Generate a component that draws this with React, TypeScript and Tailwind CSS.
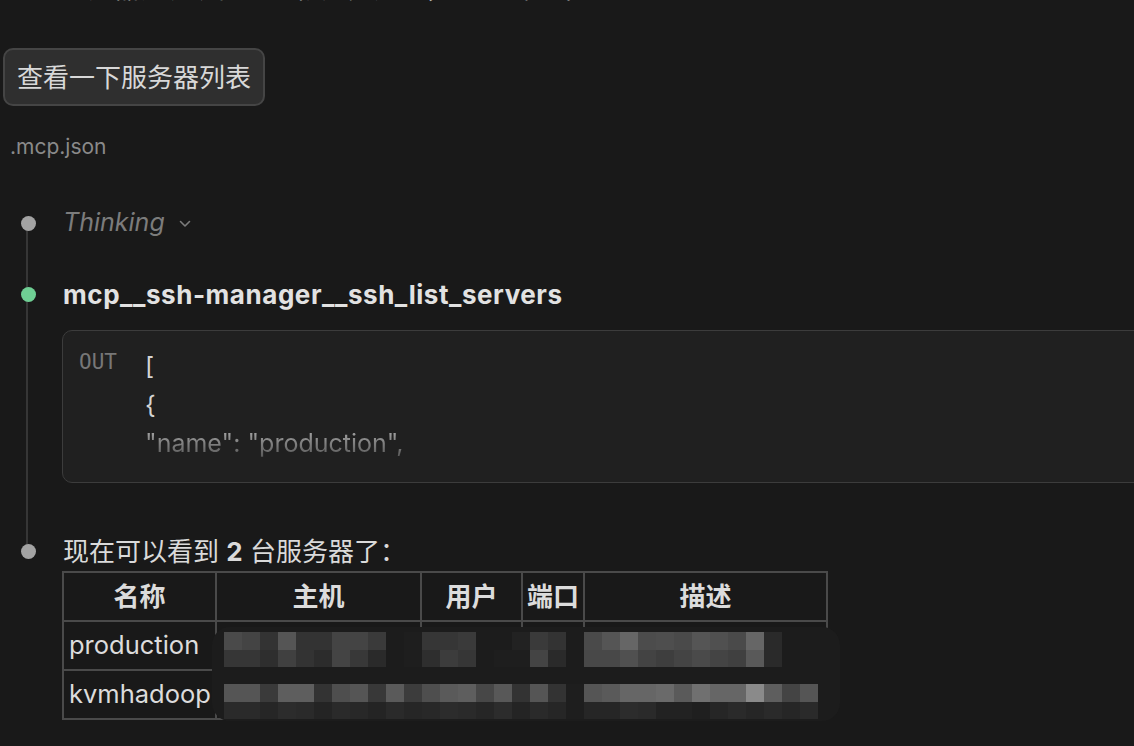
import React from "react";

const FONT = { fontFamily: 'Inter, "Noto Sans CJK SC", "Noto Sans", sans-serif' };

const r1top = ["#4a4a4a","#444444","#333333","#555555","#333333","#333333","#444444","#444444","#3a3a3a","#1c1c1c","#1e1e1e","#363636","#363636","#3a3a3a","#1c1c1c","#1c1c1c","#222222","#3a3a3a","#333333","#1c1c1c","#4a4a4a","#555555","#666666","#4c4c4c","#4e4e4e","#4a4a4a","#555555","#505050","#4a4a4a","#666666","#2a2a2a"];
const r1bot = ["#363636","#363636","#2e2e2e","#404040","#333333","#2c2c2c","#444444","#383838","#2a2a2a","#1c1c1c","#1e1e1e","#2e2e2e","#3c3c3c","#363636","#1c1c1c","#1e1e1e","#1e1e1e","#444444","#2a2a2a","#1c1c1c","#484848","#484848","#505050","#434343","#3e3e3e","#444444","#4a4a4a","#444444","#404040","#595959","#2a2a2a"];
const r2top = ["#555555","#555555","#3a3a3a","#5e5e5e","#5e5e5e","#333333","#4e4e4e","#555555","#383838","#5a5a5a","#3c3c3c","#4e4e4e","#5a5a5a","#5e5e5e","#474747","#585858","#333333","#555555","#333333","#1e1e1e","#555555","#5a5a5a","#666666","#666666","#6a6a6a","#5a5a5a","#707070","#666666","#666666","#8a8a8a","#5e5e5e","#444444","#555555"];
const r2bot = ["#2a2a2a","#2a2a2a","#262626","#2c2c2c","#2a2a2a","#242424","#2a2a2a","#282828","#242424","#2a2a2a","#262626","#282828","#2c2c2c","#2a2a2a","#262626","#2c2c2c","#242424","#2a2a2a","#262626","#1e1e1e","#262626","#262626","#2c2c2c","#2a2a2a","#222222","#222222","#1f1f1f","#262626","#2a2a2a","#262626","#2a2a2a","#262626","#2a2a2a"];

function Mosaic({ top, bot }: { top: string[]; bot: string[] }) {
  return (
    <div className="flex flex-col">
      <div className="flex">
        {top.map((c, i) => (
          <div key={i} className="w-[18px] h-[18px]" style={{ background: c }} />
        ))}
      </div>
      <div className="flex">
        {bot.map((c, i) => (
          <div key={i} className="w-[18px] h-[17px]" style={{ background: c }} />
        ))}
      </div>
    </div>
  );
}

function Dot({ color }: { color: string }) {
  return <div className={`w-[15px] h-[15px] rounded-full ${color}`} />;
}

export default function App() {
  const th = "border-2 border-[#4a4a4a] h-[49px] p-0 font-bold text-center text-[26px] text-[#dcdcdc]";
  const td = "border-2 border-[#4a4a4a] h-[49px] text-[25.5px] text-[#dcdcdc] pl-[5px] pr-0 whitespace-nowrap overflow-visible";
  return (
    <div className="w-[1134px] h-[746px] overflow-hidden bg-[#191919]" style={FONT}>
      <div className="mt-[-26px] pl-[62px] text-[26px] leading-[30px] text-[#bdbdbd] whitespace-nowrap">
        服务器列表功能已经修复完成了，请再试一下
      </div>

      <div className="mt-[44px] pl-[3px]">
        <div className="inline-flex items-center h-[58px] px-[12px] rounded-[10px] border-2 border-[#454545] bg-[#2f2f2f] text-[26px] text-[#d8d8d8]">
          查看一下服务器列表
        </div>
      </div>

      <div className="mt-[28px] pl-[10px] text-[21px] leading-[26px] text-[#8a8a8a]">.mcp.json</div>

      <div className="relative mt-[45px]">
        <div className="absolute left-[26px] top-[18px] w-[2px] h-[328px] bg-[#363636]" />

        {/* Thinking */}
        <div className="flex items-center h-[36px]">
          <div className="w-[63px] flex justify-center pr-[9px] pl-[2px] relative z-10">
            <Dot color="bg-[#a3a3a3]" />
          </div>
          <span className="italic text-[25px] text-[#7c7c7c]">Thinking</span>
          <svg className="ml-[14px] mt-[2px]" width="12" height="8" viewBox="0 0 12 8" fill="none">
            <path d="M1.5 1.5 L6 6 L10.5 1.5" stroke="#7c7c7c" strokeWidth="1.6" strokeLinecap="round" strokeLinejoin="round" />
          </svg>
        </div>

        {/* Tool */}
        <div className="flex items-center h-[36px] mt-[35px]">
          <div className="w-[63px] flex justify-center pr-[9px] pl-[2px] relative z-10">
            <Dot color="bg-[#6fcf94]" />
          </div>
          <span className="font-bold text-[26px] text-[#e2e2e2] tracking-[0.55px]">mcp__ssh-manager__ssh_list_servers</span>
        </div>
        <div className="ml-[62px] mt-[18px] h-[153px] w-[1100px] rounded-[10px] border border-[#3c3c3c] bg-[#202020] flex pt-[16px] pl-[16px]">
          <div className="w-[66px] text-[21px] leading-[30px] text-[#777777]" style={{ fontFamily: '"DejaVu Sans Mono", monospace' }}>
            OUT
          </div>
          <div className="text-[25px] leading-[38.5px] text-[#d4d4d4]">
            <div>[</div>
            <div>{"{"}</div>
            <div className="bg-gradient-to-b from-[#b8b8b8] to-[#4a4a4a] bg-clip-text text-transparent">"name": "production",</div>
          </div>
        </div>

        {/* Answer */}
        <div className="flex items-center h-[36px] mt-[50px]">
          <div className="w-[63px] flex justify-center pr-[9px] pl-[2px] relative z-10">
            <Dot color="bg-[#a3a3a3]" />
          </div>
          <span className="text-[26px] text-[#dadada]">
            现在可以看到 <b>2</b> 台服务器了：
          </span>
        </div>

        <div className="relative ml-[62px] mt-[2px] w-[764px]">
          <table className="border-collapse table-fixed w-[764px]">
            <colgroup>
              <col className="w-[153px]" />
              <col className="w-[205px]" />
              <col className="w-[101px]" />
              <col className="w-[62px]" />
              <col className="w-[243px]" />
            </colgroup>
            <thead>
              <tr>
                <th className={th}>名称</th>
                <th className={th}>主机</th>
                <th className={th}>用户</th>
                <th className={th}>端口</th>
                <th className={th}>描述</th>
              </tr>
            </thead>
            <tbody>
              <tr>
                <td className={td}>production</td>
                <td className={td}></td>
                <td className={td}></td>
                <td className={td}></td>
                <td className={td}></td>
              </tr>
              <tr>
                <td className={td}>kvmhadoop</td>
                <td className={td}></td>
                <td className={td}></td>
                <td className={td}></td>
                <td className={td}></td>
              </tr>
            </tbody>
          </table>
          <div className="absolute left-[150px] top-[56px] w-[628px] h-[94px] rounded-[18px] bg-[#1c1c1c]" />
          <div className="absolute left-[162px] top-[61px]">
            <Mosaic top={r1top} bot={r1bot} />
          </div>
          <div className="absolute left-[162px] top-[113px]">
            <Mosaic top={r2top} bot={r2bot} />
          </div>
        </div>
      </div>
    </div>
  );
}
